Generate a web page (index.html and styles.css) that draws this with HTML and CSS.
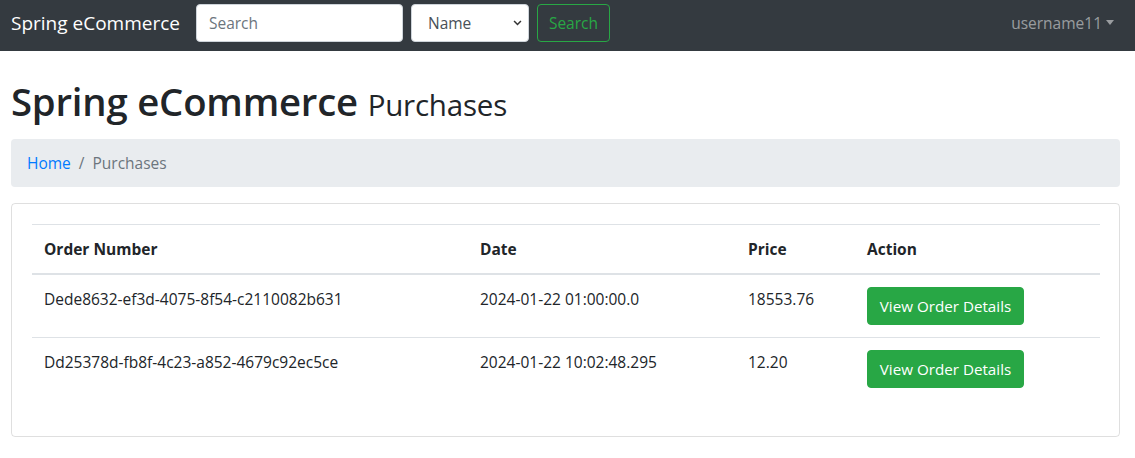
FILE: index.html
```html
<!DOCTYPE html>
<html lang="en">
<head>
<meta charset="utf-8">
<title>Spring eCommerce - Purchases</title>
<link rel="stylesheet" href="styles.css">
</head>
<body>
<nav class="navbar">
  <a class="brand" href="#">Spring eCommerce</a>
  <form class="search-form">
    <input class="form-control search-input" type="text" placeholder="Search">
    <select class="form-control search-select">
      <option>Name</option>
    </select>
    <button class="btn btn-outline-success" type="button">Search</button>
  </form>
  <div class="user-menu">
    <a class="nav-link" href="#">username11<span class="caret"></span></a>
  </div>
</nav>

<main class="container">
  <h1 class="page-title">Spring eCommerce <small>Purchases</small></h1>

  <ol class="breadcrumb">
    <li class="crumb"><a href="#">Home</a></li>
    <li class="crumb active">Purchases</li>
  </ol>

  <div class="card">
    <div class="card-body">
      <table class="table">
        <colgroup>
          <col class="c-order">
          <col class="c-date">
          <col class="c-price">
          <col class="c-action">
        </colgroup>
        <thead>
          <tr>
            <th>Order Number</th>
            <th>Date</th>
            <th>Price</th>
            <th>Action</th>
          </tr>
        </thead>
        <tbody>
          <tr>
            <td>Dede8632-ef3d-4075-8f54-c2110082b631</td>
            <td>2024-01-22 01:00:00.0</td>
            <td>18553.76</td>
            <td><a class="btn btn-success" href="#">View Order Details</a></td>
          </tr>
          <tr>
            <td>Dd25378d-fb8f-4c23-a852-4679c92ec5ce</td>
            <td>2024-01-22 10:02:48.295</td>
            <td>12.20</td>
            <td><a class="btn btn-success" href="#">View Order Details</a></td>
          </tr>
        </tbody>
      </table>
    </div>
  </div>
</main>
</body>
</html>
```

FILE: styles.css
```css
* { box-sizing: border-box; }

html, body {
  margin: 0;
  padding: 0;
}

body {
  font-family: "Open Sans", "Noto Sans", "Liberation Sans", sans-serif;
  font-size: 15.5px;
  line-height: 24px;
  color: #212529;
  background: #fff;
}

a { text-decoration: none; }

/* ---------- Navbar ---------- */
.navbar {
  display: flex;
  align-items: center;
  height: 51px;
  padding: 4px 11px 9px 11px;
  background: #343a40;
}

.brand {
  color: #fff;
  font-size: 19px;
  line-height: 30px;
  margin-right: 16px;
  white-space: nowrap;
}

.search-form {
  display: flex;
  align-items: center;
  gap: 8px;
}

.form-control {
  height: 38px;
  font-family: inherit;
  font-size: 15.5px;
  line-height: 24px;
  color: #495057;
  background-color: #fff;
  border: 1px solid #ced4da;
  border-radius: 4px;
  padding: 6px 12px;
  margin: 0;
}

.search-input {
  width: 207px;
}

.search-input::placeholder {
  color: #6c757d;
  opacity: 1;
}

.search-select {
  width: 118px;
  padding-left: 16px;
  appearance: none;
  -webkit-appearance: none;
  background-image: url("data:image/svg+xml,%3Csvg xmlns='http://www.w3.org/2000/svg' width='10' height='7' viewBox='0 0 10 7'%3E%3Cpath d='M1 1.2 L5 5.2 L9 1.2' fill='none' stroke='%23333' stroke-width='1.8'/%3E%3C/svg%3E");
  background-repeat: no-repeat;
  background-position: right 6px center;
  background-size: 9px 6px;
}

.btn {
  display: inline-block;
  font-family: inherit;
  font-size: 15.5px;
  line-height: 24px;
  padding: 6px 12px;
  border: 1px solid transparent;
  border-radius: 4px;
  white-space: nowrap;
  cursor: pointer;
}

.btn-outline-success {
  height: 38px;
  width: 73px;
  padding: 6px 0;
  text-align: center;
  color: #28a745;
  background: transparent;
  border-color: #28a745;
}

.btn-success {
  width: 157px;
  padding: 6px 0;
  text-align: center;
  font-size: 15.2px;
  color: #fff;
  background: #28a745;
  border-color: #28a745;
}

.user-menu {
  margin-left: auto;
}

.nav-link {
  display: block;
  padding: 8px 10px 8px 8px;
  color: rgba(255, 255, 255, 0.5);
}

.caret {
  display: inline-block;
  margin-left: 4px;
  vertical-align: 4px;
  border-top: 5px solid rgba(255, 255, 255, 0.5);
  border-left: 4.5px solid transparent;
  border-right: 4.5px solid transparent;
}

/* ---------- Main ---------- */
.container {
  padding: 0 15px 0 11px;
}

.page-title {
  margin: 26px 0 14px 0;
  font-size: 38.3px;
  line-height: 48px;
  font-weight: 600;
  letter-spacing: -0.2px;
}

.page-title small {
  font-size: 29.5px;
  line-height: 1;
  font-weight: 400;
  letter-spacing: -0.2px;
}

.breadcrumb {
  display: flex;
  list-style: none;
  margin: 0 0 16px 0;
  padding: 12px 16px;
  background: #e9ecef;
  border-radius: 4px;
}

.crumb a {
  color: #007bff;
}

.crumb + .crumb {
  padding-left: 8px;
}

.crumb + .crumb::before {
  content: "/";
  display: inline-block;
  padding-right: 8px;
  color: #6c757d;
}

.crumb.active {
  color: #6c757d;
}

/* ---------- Card / table ---------- */
.card {
  border: 1px solid rgba(0, 0, 0, 0.125);
  border-radius: 4px;
}

.card-body {
  padding: 20px;
}

.table {
  width: 100%;
  margin-bottom: 16px;
  border-collapse: collapse;
  table-layout: fixed;
}

.c-order { width: 436px; }
.c-date { width: 268px; }
.c-price { width: 119px; }
.c-action { width: 245px; }

.table th,
.table td {
  padding: 12px;
  text-align: left;
  vertical-align: top;
  border-top: 1px solid #dee2e6;
  white-space: nowrap;
}

.table thead th {
  font-weight: 700;
  vertical-align: bottom;
  border-bottom: 2px solid #dee2e6;
}
```
